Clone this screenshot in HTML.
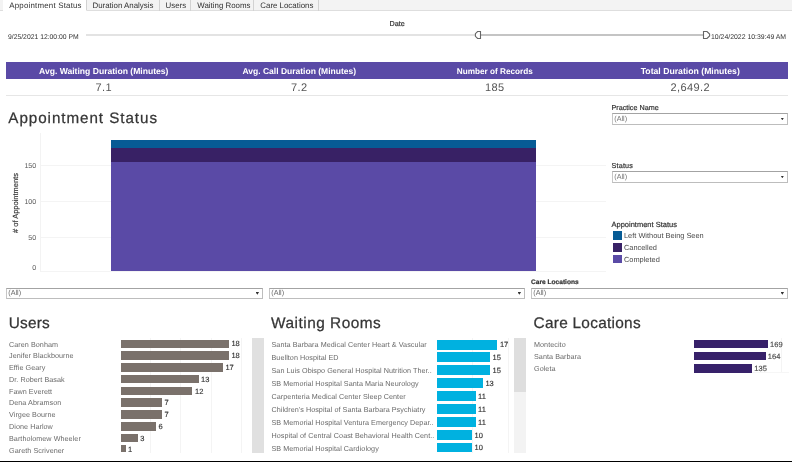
<!DOCTYPE html>
<html><head><meta charset="utf-8">
<style>
*{margin:0;padding:0;box-sizing:border-box}
html,body{width:792px;height:462px;overflow:hidden;background:#fff}
body{position:relative;font-family:"Liberation Sans",sans-serif;color:#333;text-rendering:geometricPrecision}
.a{position:absolute;white-space:nowrap;line-height:1}
.tabs{position:absolute;left:0;top:0;width:792px;height:11px;background:#f3f3f3;border-bottom:1px solid #dedede}
.tab{position:absolute;top:0;height:11px;border-right:1px solid #d2d2d2;font-size:7.9px;line-height:11px;color:#333;text-align:left;padding-left:6.3px}
.tab.on{background:#fff;border-bottom:1px solid #fff;height:11px}
.kpi{position:absolute;left:6px;top:62px;width:782px;height:17px;background:#5a4aa6}
.kh{position:absolute;top:66.5px;width:195.5px;text-align:center;font-weight:bold;font-size:8.5px;line-height:1;color:#fff}
.kv{position:absolute;top:82.5px;width:195.5px;text-align:center;font-size:11px;line-height:1;color:#555;letter-spacing:0.4px}
.title{font-size:16px;color:#353535;-webkit-text-stroke:0.25px #353535}
.dd{position:absolute;height:12px;border:1px solid #bdbdbd;border-top-color:#a3a3a3;border-left-color:#c6c6c6;background:#fff}
.dd span{position:absolute;left:1.3px;top:0.9px;font-size:7.2px;line-height:1;color:#727272}
.dd.s span{top:0.3px;color:#666}
.dd.s i{top:3.1px;right:2.9px}
.dd i{position:absolute;right:2.9px;top:3.6px;width:3.6px;height:2.7px;background:#333;clip-path:polygon(0 0,100% 0,50% 100%)}
.lbl{font-size:7px;color:#333;-webkit-text-stroke:0.2px #333}
.lg{font-size:7.4px;color:#4a4a4a}
.nm{font-size:7.2px;color:#6a6a6a;letter-spacing:0.06px}
.val{font-size:7.5px;color:#333;-webkit-text-stroke:0.15px #333}
.bar{position:absolute}
.gl{position:absolute;background:#f4f4f4}
</style></head><body><div style="position:absolute;left:0;top:0;width:792px;height:462px;will-change:transform">

<div class="tabs">
  <div class="tab" style="left:0;width:3px;"></div>
  <div class="tab on" style="left:3px;width:84px;border-right:1px solid #d2d2d2;letter-spacing:0.2px">Appointment Status</div>
  <div class="tab" style="left:87px;width:73px;padding-left:5.5px">Duration Analysis</div>
  <div class="tab" style="left:160px;width:31px;padding-left:5.5px">Users</div>
  <div class="tab" style="left:191px;width:63px">Waiting Rooms</div>
  <div class="tab" style="left:254px;width:65px">Care Locations</div>
</div>

<!-- date slider -->
<div class="a lbl" style="left:389.5px;top:20.3px;font-size:7.2px">Date</div>
<div class="a" style="left:8px;top:35px;font-size:6.8px;color:#333">9/25/2021 12:00:00 PM</div>
<div class="a" style="left:711px;top:34.5px;font-size:6.9px;color:#333">10/24/2022 10:39:49 AM</div>
<div class="a" style="left:86px;top:34px;width:389px;height:2px;background:#e3e3e3"></div>
<div class="a" style="left:481px;top:34px;width:222px;height:2px;background:#c4c4c4"></div>
<svg class="a" style="left:474px;top:30px" width="8" height="10" viewBox="0 0 8 10"><path d="M6.5 1.5 H3.6 L1.4 3.7 V6.3 L3.6 8.5 H6.5 Z" fill="#fff" stroke="#666" stroke-width="1.1"/></svg>
<svg class="a" style="left:702px;top:30px" width="9" height="10" viewBox="0 0 9 10"><path d="M1.5 1.5 H5 L7.6 4.1 V5.9 L5 8.5 H1.5 Z" fill="#fff" stroke="#666" stroke-width="1.1"/></svg>

<!-- KPI -->
<div class="kpi"></div>
<div class="kh" style="left:6px;font-size:8.58px">Avg. Waiting Duration (Minutes)</div>
<div class="kh" style="left:201.5px">Avg. Call Duration (Minutes)</div>
<div class="kh" style="left:397px;font-size:8.2px;top:67.5px">Number of Records</div>
<div class="kh" style="left:592.5px;font-size:8.68px">Total Duration (Minutes)</div>
<div class="kv" style="left:6px">7.1</div>
<div class="kv" style="left:201.5px">7.2</div>
<div class="kv" style="left:397px">185</div>
<div class="kv" style="left:592.5px">2,649.2</div>
<div class="a" style="left:6px;top:95px;width:782px;height:1px;background:#e6e6e6"></div>

<!-- Appointment status chart -->
<div class="a title" style="left:8.3px;top:110.8px;font-size:15.2px;letter-spacing:0.95px">Appointment Status</div>
<div class="a" style="left:40px;top:133px;width:1px;height:139px;background:#f3f3f3"></div>
<div class="gl" style="left:41px;top:165px;width:565px;height:1px"></div>
<div class="gl" style="left:41px;top:201px;width:565px;height:1px"></div>
<div class="gl" style="left:41px;top:237px;width:565px;height:1px"></div>
<div class="gl" style="left:41px;top:271px;width:565px;height:1px"></div>
<div class="a" style="left:24.4px;top:163px;font-size:7.1px;color:#5a5a5a">150</div>
<div class="a" style="left:24.4px;top:199px;font-size:7.1px;color:#5a5a5a">100</div>
<div class="a" style="left:28.3px;top:235px;font-size:7.1px;color:#5a5a5a">50</div>
<div class="a" style="left:32.3px;top:265px;font-size:7.1px;color:#5a5a5a">0</div>
<div class="a" style="left:16px;top:202.5px;font-size:7.5px;color:#333;-webkit-text-stroke:0.15px #333;transform:translate(-50%,-50%) rotate(-90deg)">
# of Appointments</div>
<div class="bar" style="left:111px;top:140px;width:425px;height:8.3px;background:#065b95"></div>
<div class="bar" style="left:111px;top:148.3px;width:425px;height:13.4px;background:#382165"></div>
<div class="bar" style="left:111px;top:161.7px;width:425px;height:109.5px;background:#5a4aa6"></div>

<!-- right filters -->
<div class="a lbl" style="left:611.5px;top:104.2px;font-size:7.2px">Practice Name</div>
<div class="dd" style="left:612px;top:113px;width:176px"><span>(All)</span><i></i></div>
<div class="a lbl" style="left:611.5px;top:162.4px;font-size:7.2px;letter-spacing:0.2px">Status</div>
<div class="dd" style="left:612px;top:171px;width:176px"><span>(All)</span><i></i></div>
<div class="a lbl" style="left:611.5px;top:220.5px;font-size:7.5px">Appointment Status</div>
<div class="a" style="left:613px;top:231px;width:9px;height:9px;background:#065b95"></div>
<div class="a" style="left:613px;top:243px;width:9px;height:9px;background:#382266"></div>
<div class="a" style="left:613px;top:255px;width:9px;height:8px;background:#5a4aa6"></div>
<div class="a lg" style="left:624px;top:231.5px">Left Without Being Seen</div>
<div class="a lg" style="left:624px;top:243.9px">Cancelled</div>
<div class="a lg" style="left:624px;top:255.6px">Completed</div>

<!-- filter row -->
<div class="dd s" style="left:6px;top:288px;width:257px;height:11px"><span>(All)</span><i></i></div>
<div class="dd s" style="left:269px;top:288px;width:256px;height:11px"><span>(All)</span><i></i></div>
<div class="a lbl" style="left:531px;top:280.2px;font-weight:bold;font-size:6.6px">Care Locations</div>
<div class="dd s" style="left:531px;top:288px;width:257px;height:11px"><span>(All)</span><i></i></div>

<!-- bottom titles -->
<div class="a title" style="left:8.8px;top:316.4px;font-size:15.4px;letter-spacing:0.2px">Users</div>
<div class="a title" style="left:271px;top:316.4px;font-size:15.4px;letter-spacing:0.5px">Waiting Rooms</div>
<div class="a title" style="left:533.5px;top:316.4px;font-size:15.4px;letter-spacing:0.28px">Care Locations</div>

<div id="users"></div>
<div id="wr"></div>
<div id="cl"></div>
<!--BOTTOM-->
<div class="a" style="left:0;top:338px;width:792px;height:117px;overflow:hidden">
<div class="gl" style="left:149.9px;top:0;width:1px;height:114.5px"></div>
<div class="gl" style="left:180.3px;top:0;width:1px;height:114.5px"></div>
<div class="gl" style="left:210.7px;top:0;width:1px;height:114.5px"></div>
<div class="gl" style="left:241.1px;top:0;width:1px;height:114.5px"></div>
<div class="a nm" style="left:9px;top:2.58px">Caren Bonham</div>
<div class="bar" style="left:121px;top:1.50px;width:107.94px;height:8.70px;background:#7a716b"></div>
<div class="a val" style="left:231.4px;top:2.44px">18</div>
<div class="a nm" style="left:9px;top:14.35px">Jenifer Blackbourne</div>
<div class="bar" style="left:121px;top:13.27px;width:107.94px;height:8.70px;background:#7a716b"></div>
<div class="a val" style="left:231.4px;top:14.20px">18</div>
<div class="a nm" style="left:9px;top:26.12px">Effie Geary</div>
<div class="bar" style="left:121px;top:25.04px;width:101.86px;height:8.70px;background:#7a716b"></div>
<div class="a val" style="left:225.4px;top:25.98px">17</div>
<div class="a nm" style="left:9px;top:37.89px">Dr. Robert Basak</div>
<div class="bar" style="left:121px;top:36.81px;width:77.54px;height:8.70px;background:#7a716b"></div>
<div class="a val" style="left:201.0px;top:37.75px">13</div>
<div class="a nm" style="left:9px;top:49.66px">Fawn Everett</div>
<div class="bar" style="left:121px;top:48.58px;width:71.46px;height:8.70px;background:#7a716b"></div>
<div class="a val" style="left:195.0px;top:49.51px">12</div>
<div class="a nm" style="left:9px;top:61.43px">Dena Abramson</div>
<div class="bar" style="left:121px;top:60.35px;width:41.06px;height:8.70px;background:#7a716b"></div>
<div class="a val" style="left:164.6px;top:61.29px">7</div>
<div class="a nm" style="left:9px;top:73.20px">Virgee Bourne</div>
<div class="bar" style="left:121px;top:72.12px;width:41.06px;height:8.70px;background:#7a716b"></div>
<div class="a val" style="left:164.6px;top:73.06px">7</div>
<div class="a nm" style="left:9px;top:84.97px">Dione Harlow</div>
<div class="bar" style="left:121px;top:83.89px;width:34.98px;height:8.70px;background:#7a716b"></div>
<div class="a val" style="left:158.5px;top:84.82px">6</div>
<div class="a nm" style="left:9px;top:96.74px">Bartholomew Wheeler</div>
<div class="bar" style="left:121px;top:95.66px;width:16.74px;height:8.70px;background:#7a716b"></div>
<div class="a val" style="left:140.2px;top:96.59px">3</div>
<div class="a nm" style="left:9px;top:108.51px">Gareth Scrivener</div>
<div class="bar" style="left:121px;top:107.43px;width:4.58px;height:7.07px;background:#7a716b"></div>
<div class="a val" style="left:128.1px;top:108.37px">1</div>
<div class="a" style="left:252px;top:0;width:12px;height:114.5px;background:#e0e0e0"></div>
<div class="gl" style="left:472.0px;top:0;width:1px;height:114.5px"></div>
<div class="gl" style="left:508.3px;top:0;width:1px;height:114.5px"></div>
<div class="a nm" style="left:271.5px;top:3.23px">Santa Barbara Medical Center Heart &amp; Vascular</div>
<div class="bar" style="left:436.8px;top:1.50px;width:60.61px;height:10.00px;background:#00b1e0"></div>
<div class="a val" style="left:499.9px;top:3.08px">17</div>
<div class="a nm" style="left:271.5px;top:16.15px">Buellton Hospital ED</div>
<div class="bar" style="left:436.8px;top:14.43px;width:53.35px;height:10.00px;background:#00b1e0"></div>
<div class="a val" style="left:492.6px;top:16.01px">15</div>
<div class="a nm" style="left:271.5px;top:29.08px">San Luis Obispo General Hospital Nutrition Ther..</div>
<div class="bar" style="left:436.8px;top:27.35px;width:53.35px;height:10.00px;background:#00b1e0"></div>
<div class="a val" style="left:492.6px;top:28.94px">15</div>
<div class="a nm" style="left:271.5px;top:42.00px">SB Memorial Hospital Santa Maria Neurology</div>
<div class="bar" style="left:436.8px;top:40.27px;width:46.09px;height:10.00px;background:#00b1e0"></div>
<div class="a val" style="left:485.4px;top:41.86px">13</div>
<div class="a nm" style="left:271.5px;top:54.93px">Carpenteria Medical Center Sleep Center</div>
<div class="bar" style="left:436.8px;top:53.20px;width:38.83px;height:10.00px;background:#00b1e0"></div>
<div class="a val" style="left:478.1px;top:54.78px">11</div>
<div class="a nm" style="left:271.5px;top:67.85px">Children's Hospital of Santa Barbara Psychiatry</div>
<div class="bar" style="left:436.8px;top:66.12px;width:38.83px;height:10.00px;background:#00b1e0"></div>
<div class="a val" style="left:478.1px;top:67.71px">11</div>
<div class="a nm" style="left:271.5px;top:80.78px">SB Memorial Hospital Ventura Emergency Depar..</div>
<div class="bar" style="left:436.8px;top:79.05px;width:38.83px;height:10.00px;background:#00b1e0"></div>
<div class="a val" style="left:478.1px;top:80.63px">11</div>
<div class="a nm" style="left:271.5px;top:93.70px">Hospital of Central Coast Behavioral Health Cent..</div>
<div class="bar" style="left:436.8px;top:91.98px;width:35.20px;height:10.00px;background:#00b1e0"></div>
<div class="a val" style="left:474.5px;top:93.56px">10</div>
<div class="a nm" style="left:271.5px;top:106.63px">SB Memorial Hospital Cardiology</div>
<div class="bar" style="left:436.8px;top:104.90px;width:35.20px;height:9.60px;background:#00b1e0"></div>
<div class="a val" style="left:474.5px;top:106.48px">10</div>
<div class="a" style="left:514px;top:0;width:12px;height:114.5px;background:#f3f3f3"></div>
<div class="a" style="left:514px;top:0;width:12px;height:54px;background:#dedede"></div>
<div class="gl" style="left:781px;top:0;width:1px;height:35px"></div>
<div class="gl" style="left:694px;top:34.4px;width:95px;height:1px;background:#f6f6f6"></div>
<div class="a nm" style="left:534px;top:2.83px">Montecito</div>
<div class="bar" style="left:694.35px;top:1.80px;width:73.53px;height:8.60px;background:#37216a"></div>
<div class="a val" style="left:770.1px;top:2.69px;color:#555">169</div>
<div class="a nm" style="left:534px;top:14.93px">Santa Barbara</div>
<div class="bar" style="left:694.35px;top:13.90px;width:71.21px;height:8.60px;background:#37216a"></div>
<div class="a val" style="left:767.8px;top:14.79px;color:#555">164</div>
<div class="a nm" style="left:534px;top:27.03px">Goleta</div>
<div class="bar" style="left:694.35px;top:26.00px;width:57.73px;height:8.60px;background:#37216a"></div>
<div class="a val" style="left:754.3px;top:26.88px;color:#555">135</div>
</div>
<!--/BOTTOM-->


<div class="a" style="left:0;top:461px;width:792px;height:1px;background:#000"></div>
</div></body></html>
